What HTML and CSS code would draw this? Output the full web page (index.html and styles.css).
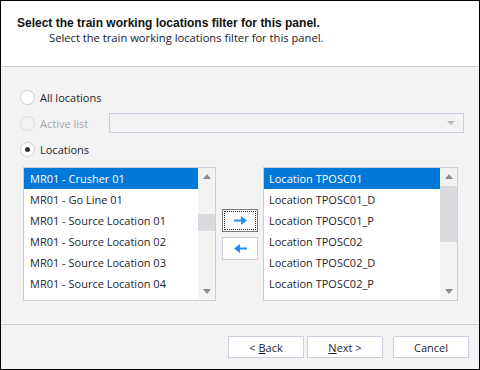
FILE: index.html
```html
<!DOCTYPE html>
<html lang="en">
<head>
    <meta charset="UTF-8">
    <title>Train Working Locations Filter</title>
    <link rel="stylesheet" href="styles.css">
</head>
<body>
    <div class="dialog">
        <div class="header">
            <div class="title">Select the train working locations filter for this panel.</div>
            <div class="subtitle">Select the train working locations filter for this panel.</div>
        </div>

        <div class="content">
            <div class="option">
                <span class="radio"></span>
                <span class="label">All locations</span>
            </div>
            <div class="option disabled">
                <span class="radio"></span>
                <span class="label">Active list</span>
                <div class="combo"><span class="combo-arrow"></span></div>
            </div>
            <div class="option">
                <span class="radio checked"></span>
                <span class="label">Locations</span>
            </div>

            <div class="lists">
                <div class="listbox left">
                    <ul class="items">
                        <li class="selected">MR01 - Crusher 01</li>
                        <li>MR01 - Go Line 01</li>
                        <li>MR01 - Source Location 01</li>
                        <li>MR01 - Source Location 02</li>
                        <li>MR01 - Source Location 03</li>
                        <li>MR01 - Source Location 04</li>
                    </ul>
                    <div class="scrollbar">
                        <span class="sb-btn up"></span>
                        <div class="track"><div class="thumb thumb-left"></div></div>
                        <span class="sb-btn down"></span>
                    </div>
                </div>

                <div class="movers">
                    <button class="mover focused">
                        <svg width="13" height="9" viewBox="0 0 13 9"><path d="M0 3.5h8v2H0z M7 0l6 4.5-6 4.5z" fill="#1e8ff0"/></svg>
                    </button>
                    <button class="mover">
                        <svg width="13" height="9" viewBox="0 0 13 9"><path d="M13 3.5H5v2h8z M6 0L0 4.5 6 9z" fill="#1e8ff0"/></svg>
                    </button>
                </div>

                <div class="listbox right">
                    <ul class="items">
                        <li class="selected">Location TPOSC01</li>
                        <li>Location TPOSC01_D</li>
                        <li>Location TPOSC01_P</li>
                        <li>Location TPOSC02</li>
                        <li>Location TPOSC02_D</li>
                        <li>Location TPOSC02_P</li>
                    </ul>
                    <div class="scrollbar">
                        <span class="sb-btn up"></span>
                        <div class="track"><div class="thumb thumb-right"></div></div>
                        <span class="sb-btn down"></span>
                    </div>
                </div>
            </div>
        </div>

        <div class="footer">
            <button class="btn">&lt; <u>B</u>ack</button>
            <button class="btn"><u>N</u>ext &gt;</button>
            <button class="btn cancel">Cancel</button>
        </div>
    </div>
</body>
</html>
```

FILE: styles.css
```css
body {
    margin: 0;
    padding: 0;
    background: #f3f3f3;
    font-family: "Open Sans", "Noto Sans", sans-serif;
    font-size: 11px;
    color: #1e1e2e;
}
.dialog {
    width: 480px;
    height: 370px;
    box-sizing: border-box;
    border: 1px solid #000;
    display: flex;
    flex-direction: column;
    background: #f3f3f3;
}
.header {
    height: 50px;
    background: #fff;
    border-bottom: 1px solid #cfcddd;
    padding: 15px 0 0 16px;
}
.title {
    font-family: "Liberation Sans", Arial, sans-serif;
    font-weight: bold;
    font-size: 12px;
    color: #111;
    line-height: 14px;
}
.subtitle {
    margin-left: 32px;
    margin-top: 1px;
    font-size: 11.2px;
    line-height: 14px;
    color: #1a1a2a;
}
.content {
    flex: 1;
    padding: 17px 0 0 19px;
    border-bottom: 1px solid #cfcddd;
}
.option {
    display: flex;
    align-items: center;
    height: 26px;
}
.radio {
    width: 13px;
    height: 13px;
    border: 1px solid #cdcdd5;
    border-radius: 50%;
    background: #fff;
    display: flex;
    align-items: center;
    justify-content: center;
    margin-right: 5px;
}
.radio.checked::after {
    content: "";
    width: 5px;
    height: 5px;
    border-radius: 50%;
    background: #333;
}
.option.disabled .radio {
    background: #f3f3f3;
    border-color: #dcdce2;
}
.option.disabled .label {
    color: #a6a6b0;
}
.combo {
    width: 353px;
    height: 18px;
    margin-left: auto;
    margin-right: 15px;
    border: 1px solid #cfcde0;
    display: flex;
    align-items: center;
    justify-content: flex-end;
}
.combo-arrow {
    width: 0;
    height: 0;
    border-left: 4px solid transparent;
    border-right: 4px solid transparent;
    border-top: 4px solid #b8b8c0;
    margin-right: 8px;
}
.lists {
    display: flex;
    align-items: flex-start;
    margin-top: 5px;
    margin-left: 3px;
}
.listbox {
    height: 132px;
    border: 1px solid #cfcddd;
    background: #fff;
    display: flex;
}
.listbox.left {
    width: 191px;
}
.listbox.right {
    width: 193px;
}
.items {
    list-style: none;
    margin: 0;
    padding: 0;
    flex: 1;
}
.items li {
    height: 21px;
    line-height: 21px;
    padding-left: 6px;
    white-space: nowrap;
}
.right .items li {
    padding-left: 5px;
}
.items li.selected {
    background: #0078d7;
    color: #fff;
}
.scrollbar {
    width: 17px;
    background: #f3f3f3;
    display: flex;
    flex-direction: column;
}
.sb-btn {
    height: 17px;
    display: flex;
    align-items: center;
    justify-content: center;
}
.sb-btn::after {
    content: "";
    border-left: 4px solid transparent;
    border-right: 4px solid transparent;
}
.sb-btn.up::after {
    border-bottom: 5px solid #8a8a92;
}
.sb-btn.down::after {
    border-top: 5px solid #8a8a92;
}
.track {
    flex: 1;
}
.thumb {
    background: #dadade;
}
.thumb-left {
    margin-top: 29px;
    height: 17px;
}
.thumb-right {
    margin-top: 1px;
    height: 56px;
}
.movers {
    display: flex;
    flex-direction: column;
    gap: 5px;
    margin: 42px 5px 0 6px;
}
.mover {
    width: 36px;
    height: 23px;
    padding: 0;
    background: #fff;
    border: 1px solid #cfcddd;
    display: flex;
    align-items: center;
    justify-content: center;
}
.mover.focused {
    border-color: #7a7a7a;
    outline: 1px dotted #222;
    outline-offset: -3px;
}
.footer {
    height: 44px;
    display: flex;
    justify-content: flex-end;
    align-items: flex-start;
    padding: 11px 10px 0 0;
    box-sizing: border-box;
}
.btn {
    width: 76px;
    height: 22px;
    padding: 0;
    background: #fff;
    border: 1px solid #cfcde0;
    font-family: "Open Sans", "Noto Sans", sans-serif;
    font-size: 11px;
    color: #1e1e2e;
    margin-left: 3px;
}
.btn.cancel {
    margin-left: 10px;
}
```
